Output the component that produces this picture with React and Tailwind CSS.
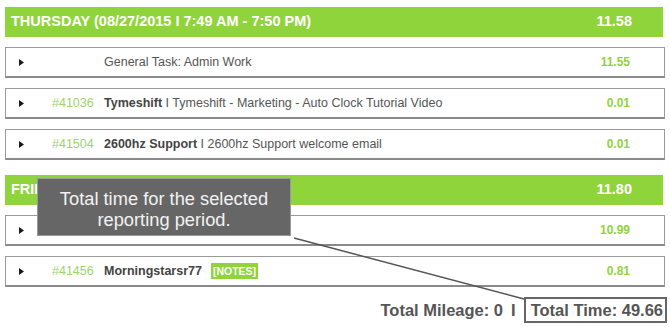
import React from "react";

const days = [
  {
    title: "THURSDAY (08/27/2015 I 7:49 AM - 7:50 PM)",
    total: "11.58",
    rows: [
      { id: "", name: "", desc: "General Task: Admin Work", value: "11.55" },
      { id: "#41036", name: "Tymeshift", desc: " I Tymeshift - Marketing - Auto Clock Tutorial Video", value: "0.01" },
      { id: "#41504", name: "2600hz Support", desc: " I 2600hz Support welcome email", value: "0.01" },
    ],
  },
  {
    title: "FRIDAY (08/28/2015 I 7:52 AM - 7:40 PM)",
    total: "11.80",
    rows: [
      { id: "", name: "", desc: "General Task: Admin Work", value: "10.99" },
      { id: "#41456", name: "Morningstarsr77", desc: "", notes: true, value: "0.81" },
    ],
  },
];

function Caret() {
  return (
    <svg width="5" height="7" viewBox="0 0 5 7" className="block">
      <path d="M0 0 L5 3.5 L0 7 Z" fill="#1a1a1a" />
    </svg>
  );
}

function Row({ row }) {
  return (
    <div className="mt-[10px] h-[31px] flex items-center border border-[#9a9a9a] border-b-2 border-b-[#8a8a8a] bg-white">
      <div className="w-[46px] pl-[13px] shrink-0">
        <Caret />
      </div>
      <div className="w-[52px] shrink-0 text-[12.5px] text-[#9bd46a]">{row.id}</div>
      <div className="flex-1 flex items-center text-[12.5px] text-[#555]">
        {row.name && <span className="font-bold text-[#444]">{row.name}</span>}
        {row.desc && <span className="whitespace-pre">{row.desc}</span>}
        {row.notes && (
          <span className="ml-[9px] bg-[#8fd43a] text-white font-bold text-[10.5px] leading-[16px] px-[2px]">
            [NOTES]
          </span>
        )}
      </div>
      <div className="pr-[34px] text-[12px] font-bold text-[#8fd43a]">{row.value}</div>
    </div>
  );
}

export default function App() {
  return (
    <div
      className="relative w-[670px] h-[333px] bg-white overflow-hidden"
      style={{ fontFamily: '"Liberation Sans", Arial, sans-serif' }}
    >
      <div className="px-[5px] pt-[7px]">
        {days.map((day, i) => (
          <section key={i} className={i > 0 ? "mt-[15px]" : ""}>
            <div className="h-[30px] w-[658px] bg-[#8fd43a] flex items-center justify-between pl-[6px] pr-[31px] text-white font-bold text-[14.5px]">
              <span>{day.title}</span>
              <span>{day.total}</span>
            </div>
            <div className="mt-[2px]">
              {day.rows.map((row, j) => (
                <Row key={j} row={row} />
              ))}
            </div>
          </section>
        ))}

        <div className="mt-[10px] flex items-center justify-end text-[16.5px] font-bold text-[#555] -mr-[2px]">
          <span>Total Mileage: 0</span>
          <span className="mx-[8px]">I</span>
          <span className="border-2 border-[#666] pl-[5px] pr-[2px] h-[26px] flex items-center">
            Total Time: 49.66
          </span>
        </div>
      </div>

      {/* annotation overlay */}
      <svg className="absolute left-0 top-0 pointer-events-none" width="670" height="333">
        <line x1="294" y1="238" x2="524" y2="299" stroke="#555" strokeWidth="1.5" />
      </svg>
      <div className="absolute left-[37px] top-[178px] w-[254px] h-[58px] pt-[3px] bg-[#666] border border-[#999] flex items-center justify-center text-center text-[18.3px] leading-[21px] text-[#f2f2f2]">
        Total time for the selected
        <br />
        reporting period.
      </div>
    </div>
  );
}
